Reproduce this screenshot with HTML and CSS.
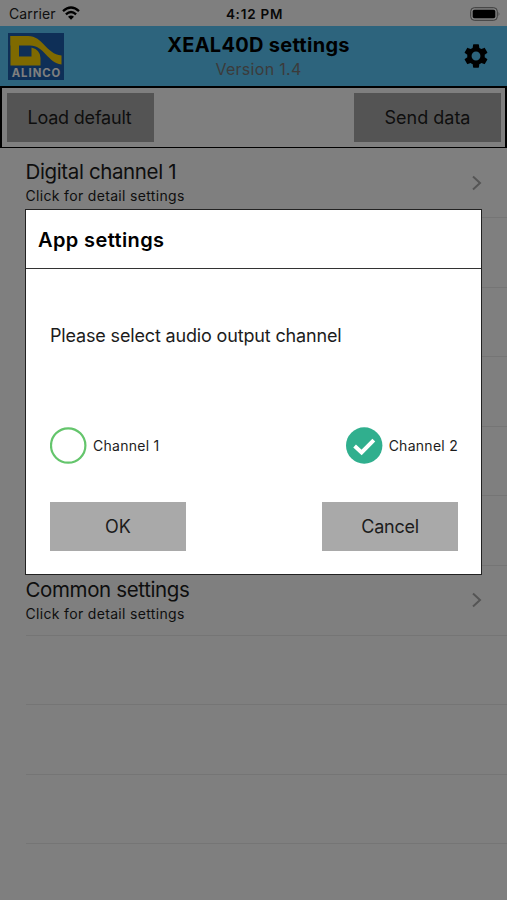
FILE: index.html
```
<!DOCTYPE html>
<html lang="en">
<head>
<meta charset="utf-8">
<title>XEAL40D settings</title>
<link rel="stylesheet" href="styles.css">
</head>
<body>
<div class="screen">
  <div class="status">
    <div class="carrier"><span>Carrier</span>
      <svg class="wifi" width="18" height="14" viewBox="0 0 18 14"><g fill="none" stroke="#000" stroke-width="2.3"><path d="M1 5.2Q9-2.2 17 5.2"/><path d="M3.9 8.3Q9 3.6 14.1 8.3"/></g><path d="M9 13.8L6 10.8Q9 8.2 12 10.8Z"/></svg>
    </div>
    <div class="time">4:12 PM</div>
    <svg class="battery" width="31" height="14" viewBox="0 0 31 14"><rect x=".7" y=".7" width="26.6" height="12.6" rx="3.6" fill="none" stroke="#777" stroke-width="1"/><rect x="2.7" y="2.7" width="22.6" height="8.6" rx="1.8"/><path d="M28.6 4.8q1.7 2.2 0 4.4z" fill="#777"/></svg>
  </div>
  <header class="header">
    <div class="logo">
      <svg width="56" height="47" viewBox="0 0 56 47"><rect width="56" height="47" fill="#1c5faf"/><g fill="#ffd500"><path d="M2.5 3H11V23.5H23.5V14.5Q32.5 17 32.5 25V32.5H2.5Z"/><path d="M2.5 3H20C35 3 38 21 53.5 22.5V31.5C40 30 36 12.5 22 12.5H2.5Z"/></g></svg>
      <span class="logo-name">ALINCO</span>
    </div>
    <div class="titles"><h1>XEAL40D settings</h1><p>Version 1.4</p></div>
    <svg class="gear" width="28" height="28" viewBox="0 0 24 24"><path d="M19.43 12.98c.04-.32.07-.64.07-.98s-.03-.66-.07-.98l2.11-1.65c.19-.15.24-.42.12-.64l-2-3.46c-.12-.22-.39-.3-.61-.22l-2.49 1c-.52-.4-1.08-.73-1.69-.98l-.38-2.65C14.46 2.18 14.25 2 14 2h-4c-.25 0-.46.18-.49.42l-.38 2.65c-.61.25-1.17.59-1.69.98l-2.49-1c-.23-.09-.49 0-.61.22l-2 3.46c-.13.22-.07.49.12.64l2.11 1.65c-.04.32-.07.65-.07.98s.03.66.07.98l-2.11 1.65c-.19.15-.24.42-.12.64l2 3.46c.12.22.39.3.61.22l2.49-1c.52.4 1.08.73 1.69.98l.38 2.65c.03.24.24.42.49.42h4c.25 0 .46-.18.49-.42l.38-2.65c.61-.25 1.17-.59 1.69-.98l2.49 1c.23.09.49 0 .61-.22l2-3.46c.12-.22.07-.49-.12-.64l-2.11-1.65zM12 15.8a3.8 3.8 0 1 1 0-7.6 3.8 3.8 0 0 1 0 7.6z"/></svg>
  </header>
  <div class="toolbar"><button class="btn tool load">Load default</button><button class="btn tool send">Send data</button></div>
  <ul class="list">
    <li class="row"><div><div class="name digital">Digital channel 1</div><div class="hint">Click for detail settings</div></div><svg class="chev" width="10" height="16" viewBox="0 0 10 16"><path d="M1 1.5L8 8L1 14.5"/></svg></li>
    <li class="row"></li>
    <li class="row"></li>
    <li class="row"></li>
    <li class="row"></li>
    <li class="row"></li>
    <li class="row"><div><div class="name common">Common settings</div><div class="hint">Click for detail settings</div></div><svg class="chev" width="10" height="16" viewBox="0 0 10 16"><path d="M1 1.5L8 8L1 14.5"/></svg></li>
    <li class="row"></li>
    <li class="row"></li>
    <li class="row"></li>
  </ul>
</div>
<div class="backdrop">
  <section class="dialog">
    <h2><span>App settings</span></h2>
    <div class="content">
      <p class="message"><span>Please select audio output channel</span></p>
      <div class="options">
        <div class="option"><svg width="37" height="37" viewBox="0 0 37 37"><circle cx="18.2" cy="18.5" r="17.2" fill="#fff" stroke="#64c56c" stroke-width="2.2"/></svg><span>Channel 1</span></div>
        <div class="option"><svg width="37" height="37" viewBox="0 0 37 37"><circle cx="18.2" cy="18.5" r="18.2" fill="#30af8e"/><path d="M8.6 19L15.6 25.4L27.8 13.2" fill="none" stroke="#fff" stroke-width="4"/></svg><span>Channel 2</span></div>
      </div>
      <div class="actions"><button class="btn ok">OK</button><button class="btn cancel">Cancel</button></div>
    </div>
  </section>
</div>
</body>
</html>
```
FILE: styles.css
```
* { box-sizing: border-box; }
body { margin: 0; font-family: Inter, "Liberation Sans", sans-serif; color: #1c1c1c; background: #fff; }
h1, h2, p, ul { margin: 0; padding: 0; }
.screen { height: 900px; overflow: hidden; background: #fff; }
.status { height: 26px; display: grid; grid-template-columns: 1fr auto 1fr; align-items: center; padding: 1px 6px 0 9px; color: #222; font-size: 14px; }
.carrier { display: flex; align-items: center; gap: 6px; letter-spacing: .1px; }
.wifi { margin-top: -2px; }
.time { font-weight: 600; font-size: 13.5px; color: #111; letter-spacing: .75px; margin-right: -1px; transform: translateX(-1px); }
.battery { justify-self: end; }
.header { height: 61px; background: #5ac8fa; border-bottom: 1px solid #000; display: grid; grid-template-columns: 58px 1fr 58px; align-items: center; padding: 0 8px; }
.logo { display: grid; width: 56px; height: 47px; }
.logo > * { grid-area: 1 / 1; }
.logo-name { align-self: end; justify-self: center; padding-bottom: 1px; color: #fff; font-size: 11.3px; font-weight: 700; line-height: 12px; letter-spacing: 1px; margin-right: -1px; }
.titles { text-align: center; padding: 2px 0 0 10px; }
.titles h1 { font-size: 20px; line-height: 25px; font-weight: 700; color: #000; letter-spacing: .28px; }
.titles p { font-size: 16px; line-height: 23px; color: #777; letter-spacing: .3px; }
.gear { justify-self: end; margin-right: 9px; }
.toolbar { height: 61px; border: solid #000; border-width: 1px 2px; display: flex; justify-content: space-between; align-items: center; padding: 0 4px 0 5px; }
.btn { height: 49px; border: 0; border-radius: 0; background: #a9a9a9; font: 18px Inter, "Liberation Sans", sans-serif; color: #1c1c1c; padding: 0; }
.tool { width: 147px; }
.load { letter-spacing: -.2px; padding-right: 2px; }
.list { list-style: none; padding: .4px 0 0 25.5px; }
.row { height: 69.6px; border-bottom: 1px solid #eaeaea; display: flex; justify-content: space-between; align-items: center; padding-right: 25px; }
.name { font-size: 20.5px; line-height: 26px; white-space: nowrap; letter-spacing: -.37px; transform: translateY(.7px); }
.hint { font-size: 14px; line-height: 23px; letter-spacing: .33px; }
.chev { fill: none; stroke: #aaa; stroke-width: 2; }
.backdrop { position: fixed; inset: 0; background: rgba(0, 0, 0, .5); display: flex; flex-direction: column; align-items: center; padding-top: 208.5px; }
.dialog { width: 457px; height: 366.5px; background: #fff; border: 1px solid #222; }
.dialog h2 { height: 59.5px; border-bottom: 1px solid #333; padding: 2px 0 0 12px; display: flex; align-items: center; font-size: 20px; font-weight: 600; color: #000; letter-spacing: .38px; }
.content { padding: 0 23px 0 24px; }
.message { padding-top: 54px; height: 157.5px; font-size: 18px; line-height: 25px; white-space: nowrap; letter-spacing: -.16px; }
.options { display: flex; justify-content: space-between; }
.option { display: flex; align-items: center; gap: 6px; font-size: 14px; letter-spacing: .27px; }
.actions { margin-top: 38.5px; display: flex; justify-content: space-between; }
.actions .btn { width: 136px; }
.cancel { letter-spacing: -.25px; }
```
